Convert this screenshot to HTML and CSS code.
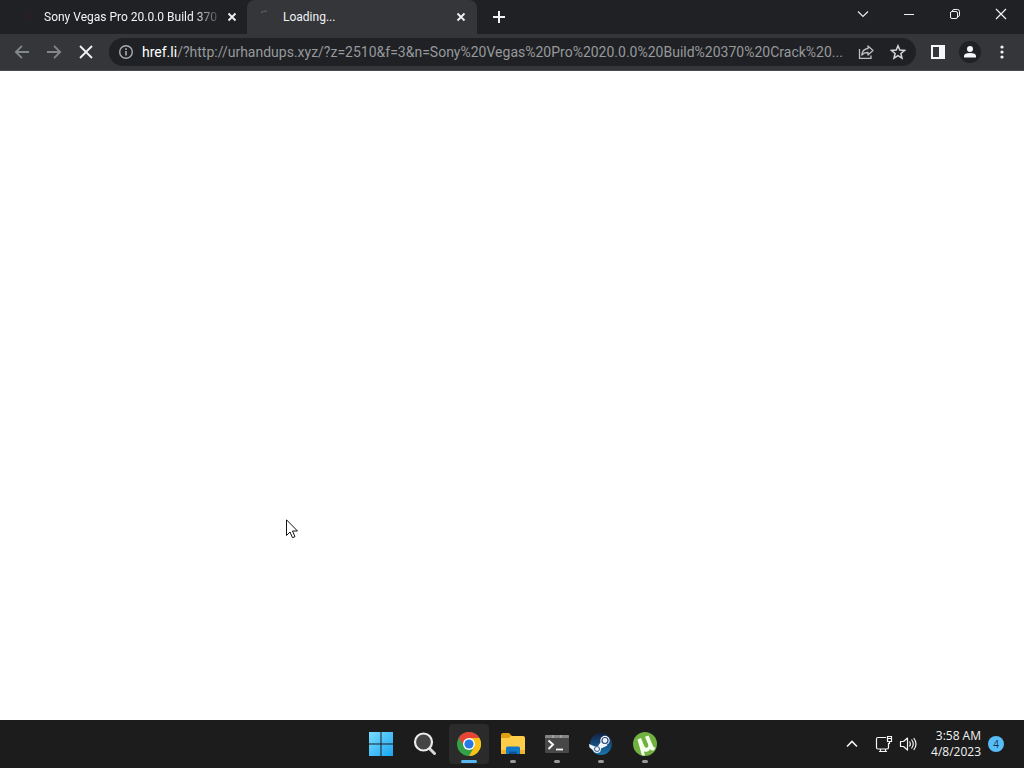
FILE: index.html
```html
<!DOCTYPE html>
<html lang="en">
<head>
<meta charset="utf-8">
<meta name="viewport" content="width=device-width, initial-scale=1">
<title>Loading...</title>
<link rel="stylesheet" href="styles.css">
</head>
<body>
<div class="desktop">
  <header class="browser">
    <div class="tabstrip">
      <div class="tab">
        <span class="tab-icon"><svg width="16" height="16" viewBox="0 0 16 16"><path d="M4 3h8v2H6v2h5v2H6v4H4z" fill="#271f21"/></svg></span>
        <span class="tab-title tab-title-faded">Sony Vegas Pro 20.0.0 Build 370</span>
        <button class="tab-close" aria-label="Close tab"><svg width="16" height="16" viewBox="0 0 16 16"><path d="M4.500 4.500l7 7M11.500 4.500l-7 7" stroke="#f1f3f4" stroke-width="1.800"/></svg></button>
      </div>
      <div class="tab tab-active">
        <span class="tab-icon"><svg width="16" height="16" viewBox="0 0 16 16"><path d="M2 3.500Q4.500 2 8 2" stroke="#65686c" fill="none"/></svg></span>
        <span class="tab-title">Loading...</span>
        <button class="tab-close" aria-label="Close tab"><svg width="16" height="16" viewBox="0 0 16 16"><path d="M4.500 4.500l7 7M11.500 4.500l-7 7" stroke="#f1f3f4" stroke-width="1.800"/></svg></button>
      </div>
      <button class="new-tab" aria-label="New tab"><svg width="16" height="16" viewBox="0 0 16 16"><path d="M8 2v12M2 8h12" stroke="#f1f3f4" stroke-width="2"/></svg></button>
      <div class="window-controls">
        <button aria-label="Search tabs"><svg width="14" height="14" viewBox="0 0 14 14"><path d="M2 4.500l5 5 5-5" stroke="#e8eaed" stroke-width="1.200" fill="none"/></svg></button>
        <button aria-label="Minimize"><svg width="14" height="14" viewBox="0 0 14 14"><path d="M2 7.500h10" stroke="#f1f3f4"/></svg></button>
        <button aria-label="Restore"><svg width="14" height="14" viewBox="0 0 14 14"><g fill="none" stroke="#f1f3f4"><rect x="2.500" y="4.500" width="7" height="7" rx="1.500"/><path d="M4.500 4.500V4Q4.500 2.500 6 2.500h3.500q2 0 2 2V8q0 1.500-1.500 1.500h-.5"/></g></svg></button>
        <button aria-label="Close window"><svg width="14" height="14" viewBox="0 0 14 14"><path d="M2 2l10 10M12 2L2 12" stroke="#f1f3f4" stroke-width="1.200"/></svg></button>
      </div>
    </div>
    <div class="toolbar">
      <button class="tool" aria-label="Back"><svg width="16" height="16" viewBox="0 0 16 16"><path d="M15 8H2M8 1.800L1.800 8 8 14.200" stroke="#84878a" stroke-width="1.800" fill="none"/></svg></button>
      <button class="tool" aria-label="Forward"><svg width="16" height="16" viewBox="0 0 16 16"><path d="M1 8h13M8 1.800L14.200 8 8 14.200" stroke="#84878a" stroke-width="1.800" fill="none"/></svg></button>
      <button class="tool" aria-label="Stop loading"><svg width="16" height="16" viewBox="0 0 16 16"><path d="M2 2l12 12M14 2L2 14" stroke="#f1f3f4" stroke-width="1.800"/></svg></button>
      <div class="omnibox">
        <button class="tool" aria-label="Site information"><svg width="16" height="16" viewBox="0 0 16 16"><circle cx="8" cy="8" r="6.300" fill="none" stroke="#a9acb0" stroke-width="1.400"/><path d="M8 7v4.500M8 4.300v1.600" stroke="#a9acb0" stroke-width="1.600"/></svg></button>
        <label class="host" for="address">href.li</label>
        <input class="address" id="address" type="text" value="/?http://urhandups.xyz/?z=2510&amp;f=3&amp;n=Sony%20Vegas%20Pro%2020.0.0%20Build%20370%20Crack%20...">
        <button class="tool" aria-label="Share"><svg width="16" height="16" viewBox="0 0 16 16"><g fill="none" stroke="#bdc0c3" stroke-width="1.300"><path d="M1.500 5v9.300h11.500V11.500"/><path d="M10 2l5 4.500-5 4.500V8.500Q6 8.300 3.800 11 4.500 5 10 4.500z" stroke-linejoin="round"/></g></svg></button>
        <button class="tool" aria-label="Bookmark this tab"><svg width="16" height="16" viewBox="0 0 16 16"><path d="M8 1.800l1.800 4.300 4.700.4-3.600 3 1.100 4.600L8 11.700l-4 2.400 1.100-4.600-3.600-3 4.700-.4z" fill="none" stroke="#d5d7da" stroke-width="1.500"/></svg></button>
      </div>
      <button class="tool" aria-label="Side panel"><svg width="16" height="16" viewBox="0 0 16 16"><path d="M1 1h14v14H1zM3 3v10h6V3z" fill="#f5f7fa" fill-rule="evenodd"/></svg></button>
      <button class="tool" aria-label="Profile"><svg width="22" height="22" viewBox="0 0 22 22"><circle cx="11" cy="11" r="11" fill="#202124"/><circle cx="11" cy="8" r="3" fill="#f5f7fa"/><path d="M5 16.500v-1.500Q5 12 11 12t6 3v1.500z" fill="#f5f7fa"/></svg></button>
      <button class="tool" aria-label="Menu"><svg width="16" height="16" viewBox="0 0 16 16"><g fill="#f1f3f4"><circle cx="8" cy="3" r="1.600"/><circle cx="8" cy="8" r="1.600"/><circle cx="8" cy="13" r="1.600"/></g></svg></button>
    </div>
  </header>
  <main class="page"></main>
  <footer class="taskbar">
    <nav class="apps" aria-label="Taskbar">
      <button class="app" aria-label="Start"><svg width="24" height="24" viewBox="0 0 24 24"><defs><linearGradient id="win" x1="0" y1="0" x2="1" y2="1"><stop offset="0" stop-color="#7bdcff"/><stop offset="1" stop-color="#18a5f3"/></linearGradient></defs><path d="M0 0h11.500v11.500H0zM12.500 0H24v11.500H12.500zM0 12.500h11.500V24H0zM12.500 12.500H24V24H12.500z" fill="url(#win)"/></svg></button>
      <button class="app" aria-label="Search"><svg width="24" height="24" viewBox="0 0 24 24"><path d="M16.500 16.500l5 5" stroke="#d8d8d8" stroke-width="3" stroke-linecap="round"/><circle cx="10.500" cy="10" r="8.500" fill="#454545" stroke="#ececec" stroke-width="2.200"/></svg></button>
      <button class="app app-active" aria-label="Google Chrome"><svg width="24" height="24" viewBox="0 0 24 24"><circle cx="12" cy="12" r="12" fill="#34a047"/><path d="M12 6h10.400A12 12 0 0 1 12 24l5.200-9z" fill="#fbc116"/><path d="M12 12H6L1.600 6A12 12 0 0 1 22.400 6H12z" fill="#e84435"/><circle cx="12" cy="12" r="6" fill="#fff"/><circle cx="12" cy="12" r="4.600" fill="#2878e4"/></svg></button>
      <button class="app app-open" aria-label="File Explorer"><svg width="24" height="24" viewBox="0 0 24 24"><path d="M0 3Q0 1 2 1h6l3 3v3H0z" fill="#dfa012"/><path d="M0 6h8l2-2h12q2 0 2 2v16H0z" fill="#ffcd48"/><path d="M0 18h24v3q0 1-1 1H1q-1 0-1-1z" fill="#efb42c"/><path d="M5 22v-6q0-1.500 1.500-1.500h11Q19 14.500 19 16v6z" fill="#1478c8"/><path d="M8 22v-2.500h8V22z" fill="#0b539a"/></svg></button>
      <button class="app app-open" aria-label="Terminal"><svg width="24" height="24" viewBox="0 0 24 24"><rect y="3" width="24" height="18" rx="1" fill="#484848"/><path d="M0 6V4q0-1 1-1h22q1 0 1 1v2z" fill="#858585"/><path d="M8 3v3M16 3v3" stroke="#bbb"/><path d="M3.500 8.500L8 12.500l-4.500 4.500" fill="none" stroke="#f4f4f4" stroke-width="2"/><path d="M11 17.500h7" stroke="#f4f4f4" stroke-width="1.800"/></svg></button>
      <button class="app app-open" aria-label="Steam"><svg width="24" height="24" viewBox="0 0 24 24"><defs><linearGradient id="steam" x1="0" y1="0" x2="0" y2="1"><stop offset="0" stop-color="#132044"/><stop offset="1" stop-color="#1876ae"/></linearGradient></defs><circle cx="12" cy="12" r="11" fill="url(#steam)"/><path d="M0 12l6 2.500 3-.5 3.500-5 6 4.500-6.500 3q0 4.500-4 4.500-3 0-4-3L.500 15.500z" fill="#f1f5fa"/><circle cx="16" cy="8.500" r="4.700" fill="#f1f5fa"/><circle cx="16" cy="8.500" r="3" fill="none" stroke="#274778" stroke-width="1.200"/><circle cx="8" cy="17" r="2.500" fill="none" stroke="#345b86"/></svg></button>
      <button class="app app-open" aria-label="uTorrent"><svg width="24" height="24" viewBox="0 0 24 24"><circle cx="12" cy="12" r="12" fill="#70b13f"/><path d="M4.500 7.500L8 6l3 7.500q1.300 3 3.500 2 1.500-1 .5-3.500L12 4.800 15.500 3.500 20 14q.8 2 2.500 1.200l-1.500 3q-2.500.8-4-1-1 2.300-3.300 2.500-1.500.2-2.700-.5l.8 4.300q-2 .2-3-.5z" fill="#f7fff0"/></svg></button>
    </nav>
    <div class="tray">
      <button class="tray-button" aria-label="Show hidden icons"><svg width="16" height="16" viewBox="0 0 16 16"><path d="M3 10.500l5-5 5 5" fill="none" stroke="#f4f4f4" stroke-width="1.600"/></svg></button>
      <button class="tray-button tray-status" aria-label="Network and volume">
        <svg width="18" height="18" viewBox="0 0 18 18"><path d="M11 2.500H3q-1.500 0-1.500 1.500v8.500Q1.500 14 3 14h9q1.500 0 1.500-1.500V8M4 16.500h8M5.500 14v2.500M10.500 14v2.500M12.500 1.500h4v5h-4zM14.500 6.500V9M12.500 3.500h4" fill="none" stroke="#f4f4f4" stroke-width="1.200"/></svg>
        <svg width="18" height="18" viewBox="0 0 18 18"><path d="M1.500 6.500v5h3l4 3.500V3l-4 3.500zM10.500 6.500q1.700 2.500 0 5M12.500 4.500q3.500 4.500 0 9M14.700 3q4.600 6 0 12" fill="none" stroke="#f4f4f4" stroke-width="1.200" stroke-linejoin="round"/></svg>
      </button>
      <button class="tray-button clock"><span>3:58 AM</span><span>4/8/2023</span></button>
      <button class="tray-button notices" aria-label="4 notifications">4</button>
    </div>
  </footer>
  <svg class="cursor" width="14" height="21" viewBox="0 0 14 21"><path d="M.500.800v15.700l3.500-3.500 2.500 5.700 2.500-1L6.500 12h5z" fill="#fff" stroke="#111"/></svg>
</div>
</body>
</html>
```
FILE: styles.css
```css
* {
  box-sizing: border-box;
}

body {
  margin: 0;
  font-family: "Open Sans", "Noto Sans", sans-serif;
  font-size: 12px;
  color: #f1f3f4;
}

button {
  display: flex;
  flex: none;
  align-items: center;
  justify-content: center;
  padding: 0;
  border: 0;
  background: none;
  color: inherit;
  font: inherit;
}

svg {
  display: block;
  flex: none;
}

.desktop {
  position: relative;
  display: flex;
  flex-direction: column;
  min-height: 100vh;
  background: #fff;
}

.browser {
  font-family: Roboto, "Open Sans", sans-serif;
}

.tabstrip {
  display: flex;
  height: 34px;
  padding-left: 8px;
  background: #202124;
}

.tab {
  display: flex;
  flex: 0 1 239px;
  align-items: center;
  min-width: 0;
  padding: 0 6px 0 12px;
}

.tab-active {
  flex-basis: 230px;
  padding-right: 7px;
  border-radius: 8px 8px 0 0;
  background: #35363a;
}

.tab-icon {
  flex: none;
  width: 24px;
}

.tab-title {
  flex: 1;
  min-width: 0;
  overflow: hidden;
  white-space: nowrap;
}

.tab-title-faded {
  mask-image: linear-gradient(to right, #000 84%, transparent);
}

.tab-close {
  width: 18px;
  height: 18px;
}

.new-tab {
  width: 28px;
  margin-left: 8px;
}

.window-controls {
  display: flex;
  margin-left: auto;
}

.window-controls button {
  width: 46px;
  height: 28px;
}

.toolbar {
  display: flex;
  align-items: center;
  height: 37px;
  padding: 0 6px;
  border-bottom: 1px solid #4a4b4f;
  background: #35363a;
}

.tool {
  width: 32px;
  height: 28px;
}

.omnibox {
  display: flex;
  flex: 1;
  align-items: center;
  min-width: 0;
  height: 28px;
  margin: 0 6px 0 7px;
  padding: 0 2px 0 1px;
  border-radius: 14px;
  background: #202124;
  font-size: 14px;
}

.host {
  flex: none;
  color: #fff;
}

.address {
  flex: 1;
  min-width: 0;
  padding: 0;
  border: 0;
  outline: 0;
  background: none;
  color: #96999d;
  font: inherit;
}

.page {
  flex: 1;
}

.taskbar {
  display: grid;
  grid-template-columns: 1fr auto 1fr;
  align-items: center;
  height: 48px;
  background: #1c1c1c;
}

.apps {
  display: flex;
  grid-column: 2;
  gap: 4px;
  padding-left: 2px;
}

.app {
  position: relative;
  width: 40px;
  height: 40px;
  border-radius: 4px;
}

.app-active {
  background: #2b2b2b;
}

.app-active::after,
.app-open::after {
  content: "";
  position: absolute;
  bottom: 1px;
  left: 50%;
  width: 6px;
  height: 3px;
  border-radius: 2px;
  background: #9b9b9b;
  transform: translateX(-50%);
}

.app-active::after {
  width: 16px;
  background: #56b8ee;
}

.tray {
  display: flex;
  align-items: center;
  justify-content: flex-end;
  padding-right: 20px;
}

.tray-button {
  height: 40px;
}

.tray-status {
  gap: 6px;
  margin: 0 14px 0 15px;
}

.clock {
  flex-direction: column;
  align-items: flex-end;
  margin-right: 7px;
  font-size: 12px;
  line-height: 16px;
}

.notices {
  width: 16px;
  height: 16px;
  border-radius: 50%;
  background: #56bdf8;
  color: #183448;
  font-size: 10px;
}

.cursor {
  position: absolute;
  top: 519px;
  left: 286px;
}
```
